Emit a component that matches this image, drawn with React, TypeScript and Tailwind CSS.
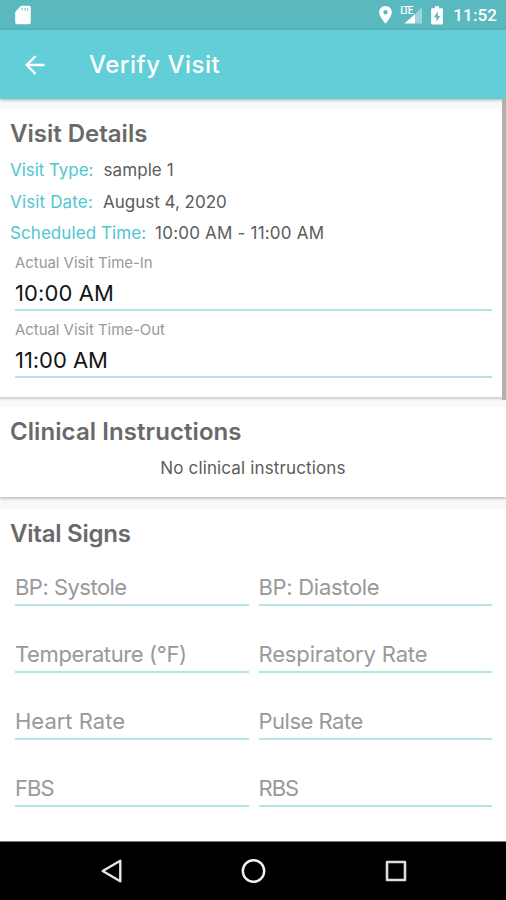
import type { ReactNode } from "react";

function StatusBar() {
  return (
    <div className="flex h-[30px] shrink-0 items-center justify-between bg-[#5ab8bf] pl-[15px] pr-[9px]">
      <svg className="h-[20px] w-[16px]" viewBox="0 0 16 20" aria-hidden="true">
        <path fill="#fff" d="M6 .8h8A1.8 1.8 0 0 1 15.800 2.600v14.800A1.800 1.800 0 0 1 14 19.200H2A1.800 1.800 0 0 1 .2 17.400V7z" />
        <path stroke="#8fcfd4" strokeWidth="1.400" d="M7.300 3v2.600M10 3v2.600M12.700 3v2.600" />
      </svg>
      <div className="flex items-center">
        <svg className="mr-[8px] h-[18px] w-[13px]" viewBox="0 0 13 18" aria-hidden="true">
          <path fill="#fff" fillRule="evenodd" d="M6.500 0C2.900 0 .2 2.800.2 6.300c0 4.500 6.300 11.400 6.300 11.400s6.300-6.900 6.300-11.400C12.800 2.800 10.100 0 6.500 0zm0 4.100a2.200 2.200 0 1 1 0 4.400 2.200 2.200 0 0 1 0-4.400z" />
        </svg>
        <div className="relative mr-[9px] h-[18px] w-[22px]">
          <span className="absolute left-0 top-0 font-['Roboto'] text-[10px] font-medium leading-[10px] tracking-[-1.5px] text-white">LTE</span>
          <svg className="h-[18px] w-[22px]" viewBox="0 0 22 18" aria-hidden="true">
            <path fill="#fff" fillOpacity=".4" d="M22 1v16.500h-7V8z" />
            <path fill="#fff" d="M15 8v9.500H4.500z" />
          </svg>
        </div>
        <svg className="mr-[10px] h-[19px] w-[12px]" viewBox="0 0 12 19" aria-hidden="true">
          <path fill="#fff" fillRule="evenodd" d="M4 .3h4v2h2.600c.8 0 1.300.5 1.300 1.300v13.600c0 .8-.5 1.300-1.300 1.300H1.400c-.8 0-1.300-.5-1.300-1.300V3.600c0-.8.5-1.300 1.300-1.300H4zM6.900 5.500 2.900 11.300h2.500v4.300l3.800-5.700H6.900z" />
        </svg>
        <span className="font-['Roboto'] text-[17px] font-medium leading-[20px] tracking-[0.1px] text-white">11:52</span>
      </div>
    </div>
  );
}

function AppBar() {
  return (
    <header className="z-10 flex h-[69px] shrink-0 items-center bg-[#62cfd8] pl-[25px] shadow-[0_1px_3px_rgba(0,0,0,0.3)]">
      <svg className="h-[20px] w-[20px]" viewBox="0 0 20 20" fill="none" stroke="#fff" strokeWidth="2.300" aria-hidden="true">
        <path d="M19.500 10H2M10.600 1 1.700 10l8.900 9" />
      </svg>
      <h1 className="ml-[44px] text-[24px] font-medium leading-[32px] tracking-[0.53px] text-white">Verify Visit</h1>
    </header>
  );
}

function Heading({ children, className }: { children: ReactNode; className: string }) {
  return <h2 className={`h-[32px] text-[24px] font-semibold leading-[32px] text-[#696969] ${className}`}>{children}</h2>;
}

function Detail({ label, value, labelClass, valueClass }: { label: string; value: string; labelClass: string; valueClass: string }) {
  return (
    <div className="flex h-[31.500px] items-center whitespace-nowrap text-[17px]">
      <span className={`text-[#50c6d1] ${labelClass}`}>{label}</span>
      <span className={`text-[#5c5c5c] ${valueClass}`}>{value}</span>
    </div>
  );
}

function TimeField({ label, value, valueClass }: { label: string; value: string; valueClass: string }) {
  return (
    <div className="mb-[8px] ml-[5px] mr-[4px]">
      <div className="h-[20px] text-[15px] leading-[20px] tracking-[-0.05px] text-[#999]">{label}</div>
      <div className={`h-[38px] border-b-2 border-[#b3e2e7] pt-[3px] text-[22px] leading-[34px] text-[#151515] ${valueClass}`}>{value}</div>
    </div>
  );
}

const vitals = [
  { name: "BP: Systole", tracking: "tracking-[-0.52px]" },
  { name: "BP: Diastole", tracking: "tracking-[-0.3px]" },
  { name: "Temperature (°F)", tracking: "tracking-[-0.38px]" },
  { name: "Respiratory Rate", tracking: "tracking-[-0.15px]" },
  { name: "Heart Rate", tracking: "tracking-[0px]" },
  { name: "Pulse Rate", tracking: "tracking-[-0.5px]" },
  { name: "FBS", tracking: "tracking-[-0.9px]" },
  { name: "RBS", tracking: "tracking-[-1px]" },
];

export default function App() {
  return (
    <div className="flex h-[900px] w-[506px] flex-col overflow-hidden bg-[#f8f8f9] font-['Inter','Noto_Sans',sans-serif]">
      <StatusBar />
      <AppBar />
      <main className="relative flex flex-1 flex-col pt-[10px]">
        <div className="absolute right-0 top-0 z-10 h-[301px] w-[4px] bg-[#b1b1b1]" />

        <section className="h-[288px] bg-white pl-[10px] pr-[10px] pt-[9px] shadow-[0_2px_2px_rgba(0,0,0,0.16)]">
          <Heading className="">Visit Details</Heading>
          <div className="mb-[3px] mt-[5px]">
            <Detail label="Visit Type:" value="sample 1" labelClass="tracking-[-0.05px]" valueClass="ml-[10px] tracking-[0.1px]" />
            <Detail label="Visit Date:" value="August 4, 2020" labelClass="tracking-[0.15px]" valueClass="ml-[10px]" />
            <Detail label="Scheduled Time:" value="10:00 AM - 11:00 AM" labelClass="tracking-[0.07px]" valueClass="ml-[9px] tracking-[0.2px]" />
          </div>
          <TimeField label="Actual Visit Time-In" value="10:00 AM" valueClass="tracking-[0.1px]" />
          <div className="h-px" />
          <TimeField label="Actual Visit Time-Out" value="11:00 AM" valueClass="tracking-[-0.05px]" />
        </section>

        <section className="mt-[10px] h-[90px] bg-white px-[10px] pt-[9px] shadow-[0_2px_2px_rgba(0,0,0,0.2)]">
          <Heading className="tracking-[0.08px]">Clinical Instructions</Heading>
          <p className="mt-[8px] text-center text-[17px] leading-[24px] tracking-[0.14px] text-[#5c5c5c]">No clinical instructions</p>
        </section>

        <section className="mt-[12px] flex-1 bg-white pl-[10px] pt-[9px]">
          <Heading className="tracking-[-0.23px]">Vital Signs</Heading>
          <div className="ml-[5px] mt-[20px] grid grid-cols-[233.5px_233.5px] gap-x-[10px] gap-y-[31px]">
            {vitals.map((v) => (
              <div key={v.name} className={`h-[36px] border-b-2 border-[#b3e5e6] pt-px text-[22px] leading-[33px] text-[#999] ${v.tracking}`}>
                {v.name}
              </div>
            ))}
          </div>
        </section>
      </main>

      <nav className="flex h-[59px] shrink-0 items-center border-t border-[#777] bg-black pl-[101px]">
        <svg className="h-[24px] w-[21px]" viewBox="0 0 21 24" fill="none" stroke="#e6e6e6" strokeWidth="2.400" strokeLinejoin="round" aria-hidden="true">
          <path d="M19.300 1.800v20.400L1.700 12z" />
        </svg>
        <svg className="ml-[119px] h-[24px] w-[25px]" viewBox="0 0 25 24" fill="none" stroke="#f2f2f2" strokeWidth="2.400" aria-hidden="true">
          <circle cx="12.500" cy="12" r="10.700" />
        </svg>
        <svg className="ml-[119px] h-[22px] w-[22px]" viewBox="0 0 22 22" fill="none" stroke="#dedede" strokeWidth="2.600" strokeLinejoin="round" aria-hidden="true">
          <path d="M2 2h18v18H2z" />
        </svg>
      </nav>
    </div>
  );
}
